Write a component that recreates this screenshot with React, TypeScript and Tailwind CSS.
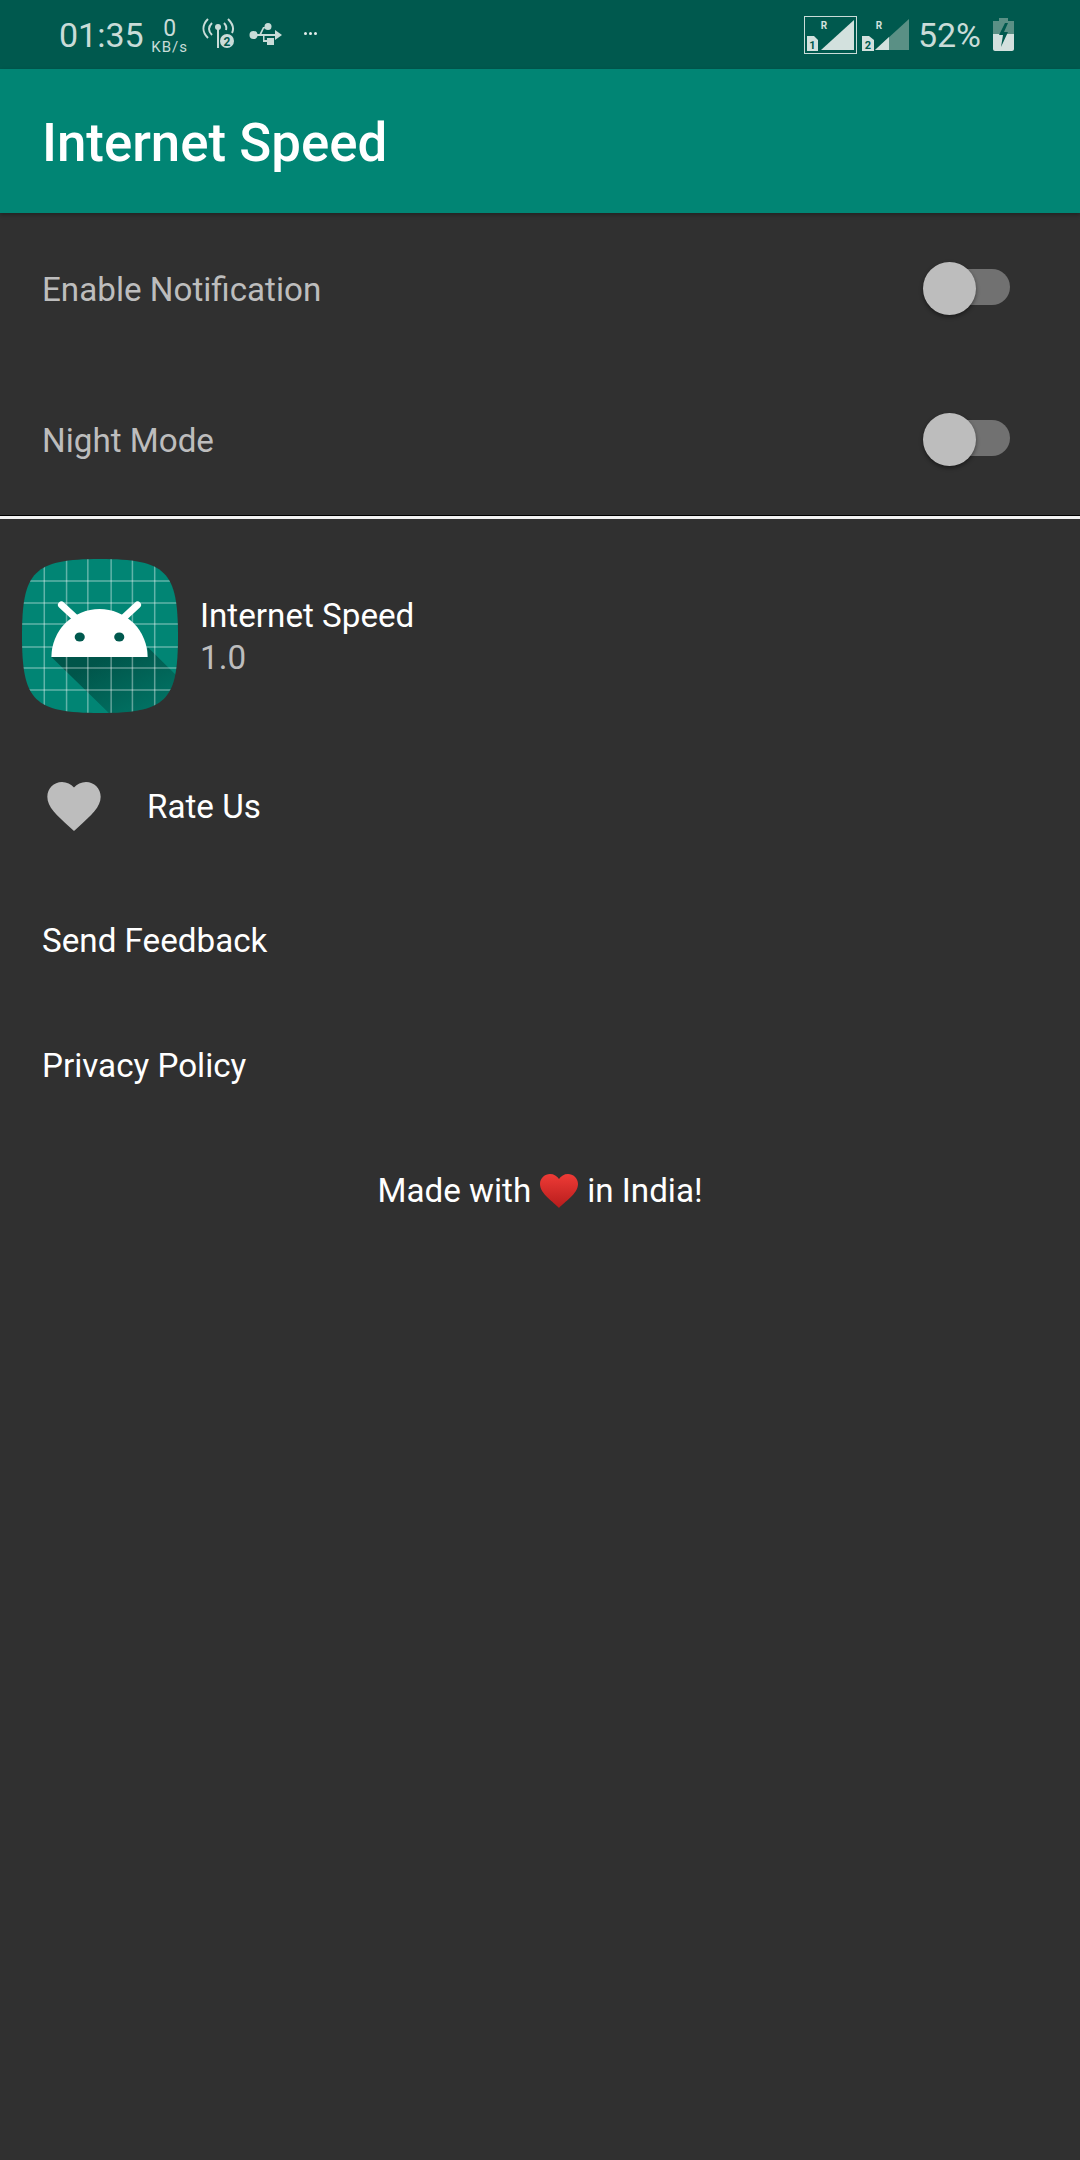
import React from "react";

const Toggle = () => (
  <div className="relative w-[87px] h-[36px] flex justify-end -mt-[3px]">
    <div className="w-[76px] h-[36px] rounded-full bg-[#717171]" />
    <div className="absolute left-0 top-[-7px] w-[53px] h-[53px] rounded-full bg-[#bdbdbd] shadow-[0_2px_4px_rgba(0,0,0,0.45)]" />
  </div>
);

const AppIcon = () => (
  <svg width="156" height="154" viewBox="0 0 154 154" preserveAspectRatio="none" className="shrink-0">
    <defs>
      <clipPath id="sq">
        <path d="M77 0C142 0 154 12 154 77C154 142 142 154 77 154C12 154 0 142 0 77C0 12 12 0 77 0Z" />
      </clipPath>
      <linearGradient id="sh" x1="0.3" y1="0.2" x2="0.9" y2="0.9">
        <stop offset="0" stopColor="#00352e" stopOpacity="0.6" />
        <stop offset="1" stopColor="#00352e" stopOpacity="0.12" />
      </linearGradient>
    </defs>
    <g clipPath="url(#sq)">
      <rect width="154" height="154" fill="#018574" />
      <polygon points="29,98 124,98 124,88 170,134 170,170 102,170" fill="url(#sh)" />
      <g stroke="#ffffff" strokeOpacity="0.38" strokeWidth="1.5">
        {[22, 44, 65, 88, 109, 131].map((v) => (
          <React.Fragment key={v}>
            <line x1={v} y1="0" x2={v} y2="154" />
            <line x1="0" y1={v} x2="154" y2={v} />
          </React.Fragment>
        ))}
      </g>
    </g>
    <path d="M29 98A47.5 48 0 0 1 124 98Z" fill="#ffffff" />
    <line x1="39" y1="46" x2="55" y2="61" stroke="#ffffff" strokeWidth="7" strokeLinecap="round" />
    <line x1="114" y1="46" x2="98" y2="61" stroke="#ffffff" strokeWidth="7" strokeLinecap="round" />
    <ellipse cx="57" cy="78" rx="5" ry="4.5" fill="#00594e" />
    <ellipse cx="96" cy="78" rx="5" ry="4.5" fill="#00594e" />
  </svg>
);

const StatusLeft = () => (
  <div className="flex items-center">
    <span className="text-[34px] leading-none text-[#c9dcd8]">01:35</span>
    <div className="ml-[7px] w-[38px] flex flex-col items-center text-[#c9dcd8] mt-[3px]">
      <span className="text-[23px] leading-[21px]">0</span>
      <span className="text-[15px] leading-[16px] tracking-[1px] whitespace-nowrap">KB/s</span>
    </div>
    <svg width="34" height="32" viewBox="0 0 34 32" className="ml-[12px] -mt-[3px]" fill="none" stroke="#c9dcd8">
      <path d="M7 2C1 8 1 15 7 21" strokeWidth="2" />
      <path d="M11 6C7 10 7 14 11 18" strokeWidth="2" />
      <path d="M27 2C33 8 33 12 31 16" strokeWidth="2" />
      <path d="M23 6C25 8 26 10 25 13" strokeWidth="2" />
      <circle cx="17" cy="10" r="3" fill="#c9dcd8" stroke="none" />
      <line x1="17" y1="10" x2="17" y2="31" strokeWidth="2" />
      <circle cx="26" cy="24" r="7" fill="#c9dcd8" stroke="none" />
      <text x="26" y="28.5" textAnchor="middle" fontSize="12" fontWeight="700" fill="#00594e" stroke="none" fontFamily="Roboto, sans-serif">2</text>
    </svg>
    <svg width="34" height="24" viewBox="0 0 34 24" className="ml-[14px]" fill="#c9dcd8">
      <circle cx="4.5" cy="12" r="4" />
      <rect x="4" y="11" width="25" height="2" />
      <polygon points="26,7 33,12 26,17" />
      <circle cx="19" cy="3.5" r="3.5" />
      <path d="M10 12L14 4H19V5.500H15L12 12Z" />
      <path d="M14 12H15.500V17H18V19H14Z" />
      <rect x="18" y="15" width="7" height="7" />
    </svg>
    <div className="ml-[21px] flex gap-[2px] -mt-[2px]">
      <span className="w-[3px] h-[3px] rounded-full bg-[#e3edeb]" />
      <span className="w-[3px] h-[3px] rounded-full bg-[#e3edeb]" />
      <span className="w-[3px] h-[3px] rounded-full bg-[#e3edeb]" />
    </div>
  </div>
);

const StatusRight = () => (
  <div className="flex items-center">
    <div className="relative w-[53px] h-[38px] border border-[#c9dcd8]">
      <svg width="51" height="36" viewBox="0 0 51 36">
        <polygon points="16,33 49,3 49,33" fill="#d3e1de" />
        <path d="M2 19H9L13 23V34H2Z" fill="#d3e1de" />
        <text x="7.500" y="32" textAnchor="middle" fontSize="11" fontWeight="700" fill="#00594e" fontFamily="Roboto, sans-serif">1</text>
        <text x="19" y="12" textAnchor="middle" fontSize="10" fontWeight="700" fill="#d3e1de" fontFamily="Roboto, sans-serif">R</text>
      </svg>
    </div>
    <svg width="49" height="34" viewBox="0 0 49 34" className="ml-[4px]">
      <polygon points="14,32 48,1 48,32" fill="#5a9085" />
      <polygon points="14,32 28,19 28,32" fill="#d3e1de" />
      <path d="M1 18H8L13 22V33H1Z" fill="#d3e1de" />
      <text x="7" y="31" textAnchor="middle" fontSize="11" fontWeight="700" fill="#00594e" fontFamily="Roboto, sans-serif">2</text>
      <text x="18" y="11" textAnchor="middle" fontSize="10" fontWeight="700" fill="#d3e1de" fontFamily="Roboto, sans-serif">R</text>
    </svg>
    <span className="ml-[8px] text-[34px] leading-none text-[#c9dcd8]">52%</span>
    <svg width="21" height="33" viewBox="0 0 21 33" className="ml-[12px]">
      <path d="M6 0H15V3H21V16H0V3H6Z" fill="#5a9085" />
      <path d="M0 16H21V31C21 32 20 33 19 33H2C1 33 0 32 0 31Z" fill="#d3e1de" />
      <polygon points="12,5 6,17 10,17 8,29 15,14 11,14 15,5" fill="#00594e" />
    </svg>
  </div>
);

export default function App() {
  return (
    <div className="w-[1080px] h-[2160px] bg-[#303030] font-['Roboto',sans-serif] overflow-hidden">
      <div className="h-[69px] bg-[#00594e] flex items-center justify-between pl-[59px] pr-[66px]">
        <StatusLeft />
        <StatusRight />
      </div>
      <div className="h-[144px] bg-[#018574] flex items-center pl-[42px] pt-[5px] shadow-[0_2px_4px_rgba(0,0,0,0.3)] relative">
        <span className="text-[52.8px] font-medium text-white leading-none">Internet Speed</span>
      </div>

      <div className="h-[151px] flex items-center justify-between pl-[42px] pr-[70px]">
        <span className="text-[33.2px] text-[#bdbdbd] mt-[3px]">Enable Notification</span>
        <Toggle />
      </div>
      <div className="h-[151px] flex items-center justify-between pl-[42px] pr-[70px]">
        <span className="text-[33.2px] text-[#bdbdbd] mt-[3px]">Night Mode</span>
        <Toggle />
      </div>
      <div className="h-[3px] bg-[#f2f2f2] border-t border-black box-content" />

      <div className="flex items-center pl-[22px] mt-[40px]">
        <AppIcon />
        <div className="ml-[22px] flex flex-col mt-[2px]">
          <span className="text-[33.2px] leading-[42px] text-white">Internet Speed</span>
          <span className="text-[33.2px] leading-[42px] text-[#bdbdbd]">1.0</span>
        </div>
      </div>

      <div className="flex items-center h-[64px] mt-[61px] pl-[42px]">
        <svg width="64" height="64" viewBox="0 0 24 24" fill="#bdbdbd" className="shrink-0">
          <path d="M12 21.35l-1.45-1.32C5.4 15.36 2 12.28 2 8.5 2 5.42 4.42 3 7.5 3c1.74 0 3.41.81 4.5 2.09C13.09 3.81 14.76 3 16.5 3 19.58 3 22 5.42 22 8.5c0 3.78-3.4 6.86-8.55 11.54L12 21.35z" />
        </svg>
        <span className="ml-[41px] text-[33.2px] text-white mt-[2px]">Rate Us</span>
      </div>

      <div className="pl-[42px] mt-[82px] text-[33.2px] leading-[42px] text-white">Send Feedback</div>
      <div className="pl-[42px] mt-[83px] text-[33.2px] leading-[42px] text-white">Privacy Policy</div>
      <div className="mt-[83px] flex items-center justify-center text-[33.2px] leading-[42px] text-white">
        <span>Made with</span>
        <svg width="38" height="34" viewBox="0 0 38 34" className="mx-[9px]">
          <defs>
            <linearGradient id="rh" x1="0" y1="0" x2="0" y2="1">
              <stop offset="0" stopColor="#ee3b36" />
              <stop offset="1" stopColor="#b71c1c" />
            </linearGradient>
          </defs>
          <path d="M19 34C14 28 0 20 0 10C0 4 5 0 10 0C14 0 17 2 19 5C21 2 24 0 28 0C33 0 38 4 38 10C38 20 24 28 19 34Z" fill="url(#rh)" />
        </svg>
        <span>in India!</span>
      </div>
    </div>
  );
}
